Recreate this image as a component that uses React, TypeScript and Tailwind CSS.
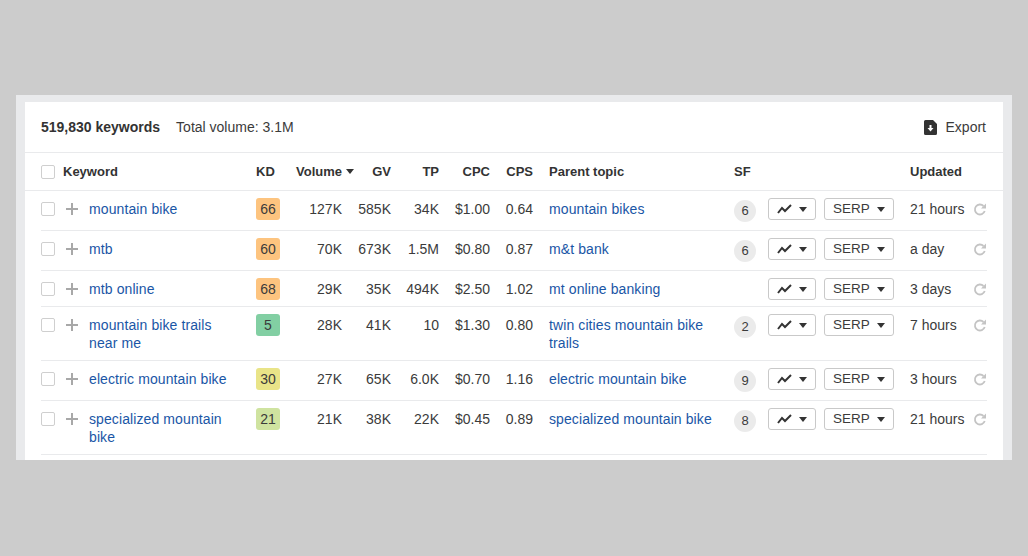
const rows = [
  { k: ["mountain bike"], kd: "66", kc: "bg-[#fdc47f]", v: "127K", gv: "585K", tp: "34K", cpc: "$1.00", cps: "0.64", p: ["mountain bikes"], sf: "6", u: "21 hours" },
  { k: ["mtb"], kd: "60", kc: "bg-[#fdc47f]", v: "70K", gv: "673K", tp: "1.5M", cpc: "$0.80", cps: "0.87", p: ["m&t bank"], sf: "6", u: "a day" },
  { k: ["mtb online"], kd: "68", kc: "bg-[#fdc47f]", v: "29K", gv: "35K", tp: "494K", cpc: "$2.50", cps: "1.02", p: ["mt online banking"], sf: "", u: "3 days" },
  { k: ["mountain bike trails", "near me"], kd: "5", kc: "bg-[#82cfa3]", v: "28K", gv: "41K", tp: "10", cpc: "$1.30", cps: "0.80", p: ["twin cities mountain bike", "trails"], sf: "2", u: "7 hours" },
  { k: ["electric mountain bike"], kd: "30", kc: "bg-[#e9e488]", v: "27K", gv: "65K", tp: "6.0K", cpc: "$0.70", cps: "1.16", p: ["electric mountain bike"], sf: "9", u: "3 hours" },
  { k: ["specialized mountain", "bike"], kd: "21", kc: "bg-[#cfe3a0]", v: "21K", gv: "38K", tp: "22K", cpc: "$0.45", cps: "0.89", p: ["specialized mountain bike"], sf: "8", u: "21 hours" },
];

const cols = "grid grid-cols-[48px_167px_24px_62px_49px_48px_51px_43px_16px_185px_34px_48px_8px_70px_16px_63px_14px] items-start";

function Check() {
  return <span className="block w-[14px] h-[14px] rounded-[2px] border border-[#cfcfcf] bg-white" />;
}

function Caret() {
  return (
    <svg width="8" height="5" viewBox="0 0 8 5" className="block">
      <path d="M0 0h8L4 5z" fill="#333" />
    </svg>
  );
}

function Lines({ items, className }: { items: string[]; className: string }) {
  return (
    <div className={className}>
      {items.map((t) => (
        <div key={t}>{t}</div>
      ))}
    </div>
  );
}

export default function App() {
  const num = "text-right my-[2px] leading-[18px]";
  const link = "my-[2px] leading-[18px] text-[#1a56a6] tracking-[0.1px]";
  return (
    <div className="h-[556px] bg-[#cccccc] pt-[95px] px-4 text-[14px] text-[#3b3b3b] font-['Liberation_Sans',Arial,sans-serif] overflow-hidden">
      <div className="h-[365px] bg-[#e9eaec] px-[9px] pt-[7px]">
        <div className="h-full bg-white overflow-hidden">
          <div className="h-[51px] border-b border-[#e9eaec] pl-4 pr-[17px] flex items-center">
            <span className="font-bold text-[#333]">519,830 keywords</span>
            <span className="ml-4">Total volume: 3.1M</span>
            <span className="ml-auto flex items-center gap-[9px]">
              <svg width="13" height="15" viewBox="0 0 13 15" className="block">
                <path fillRule="evenodd" fill="#333" d="M1.500 0H9l4 4v9.500a1.500 1.500 0 0 1-1.500 1.500h-10A1.500 1.500 0 0 1 0 13.500v-12A1.500 1.500 0 0 1 1.500 0zM5.500 5v3H3.500L6.500 11.500 9.500 8H7.500V5z" />
              </svg>
              Export
            </span>
          </div>
          <div className={`${cols} h-[38px] border-b border-[#e9eaec] pl-4 items-center! font-bold text-[13px] text-[#333]`}>
            <div className="col-span-2 flex items-center">
              <Check />
              <span className="ml-2">Keyword</span>
            </div>
            <div>KD</div>
            <div className="flex items-center justify-end">
              Volume
              <span className="ml-[4px] -mr-[12px]"><Caret /></span>
            </div>
            <div className="text-right">GV</div>
            <div className="text-right">TP</div>
            <div className="text-right">CPC</div>
            <div className="text-right">CPS</div>
            <div />
            <div>Parent topic</div>
            <div>SF</div>
            <div className="col-span-4" />
            <div className="col-span-2">Updated</div>
          </div>
          <div className="mx-4">
            {rows.map((r) => (
              <div key={r.kd} className={`${cols} pt-[7px] pb-[6px] border-b border-[#e9eaec]`}>
                <div className="flex items-start pt-[4px]">
                  <Check />
                  <svg width="12" height="12" viewBox="0 0 12 12" className="block ml-[11px] mt-px">
                    <path d="M6 0v12M0 6h12" stroke="#a8a8a8" strokeWidth="2" />
                  </svg>
                </div>
                <Lines items={r.k} className={link} />
                <div className={`h-[22px] w-[24px] rounded-[3px] ${r.kc} flex items-center justify-center`}>{r.kd}</div>
                <div className={num}>{r.v}</div>
                <div className={num}>{r.gv}</div>
                <div className={num}>{r.tp}</div>
                <div className={num}>{r.cpc}</div>
                <div className={num}>{r.cps}</div>
                <div />
                <Lines items={r.p} className={link} />
                <div>
                  {r.sf && (
                    <div className="my-[2px] w-[22px] h-[22px] rounded-full bg-[#ebebeb] text-[13px] flex items-center justify-center">{r.sf}</div>
                  )}
                </div>
                <div className="h-[22px] border border-[#c9c9c9] rounded-[3px] flex items-center pl-[8px] gap-[7px]">
                  <svg width="15" height="10" viewBox="0 0 15 10" className="block">
                    <path d="M1 9l4-5 3 3 6-6" fill="none" stroke="#333" strokeWidth="2" />
                  </svg>
                  <Caret />
                </div>
                <div />
                <div className="h-[22px] border border-[#c9c9c9] rounded-[3px] flex items-center pl-[8px] gap-[7px] text-[13.5px]">
                  SERP
                  <Caret />
                </div>
                <div />
                <div className="my-[2px] leading-[18px] whitespace-nowrap">{r.u}</div>
                <svg width="14" height="14" viewBox="0 0 14 14" className="block mt-[4px]">
                  <path d="M11.700 9A5 5 0 1 1 10.500 4" fill="none" stroke="#c4c4c4" strokeWidth="1.800" />
                  <path d="M13 1.500V6.500H8z" fill="#c4c4c4" />
                </svg>
              </div>
            ))}
          </div>
        </div>
      </div>
    </div>
  );
}
